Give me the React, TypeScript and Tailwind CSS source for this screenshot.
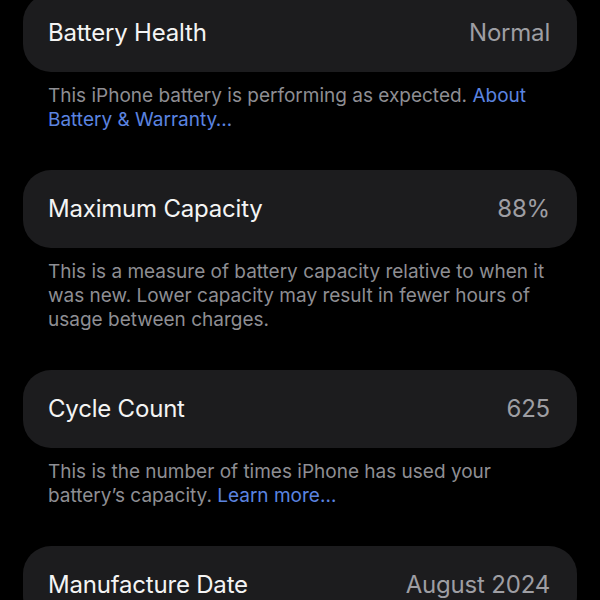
const rows = [
  {
    label: "Battery Health",
    value: "Normal",
    text: "This iPhone battery is performing as expected. ",
    link: "About Battery & Warranty…",
  },
  {
    label: "Maximum Capacity",
    value: "88%",
    text: "This is a measure of battery capacity relative to when it was new. Lower capacity may result in fewer hours of usage between charges.",
  },
  {
    label: "Cycle Count",
    value: "625",
    text: "This is the number of times iPhone has used your battery’s capacity. ",
    link: "Learn more…",
  },
  { label: "Manufacture Date", value: "August 2024" },
];

export default function App() {
  return (
    <div
      className="h-[600px] w-[600px] overflow-hidden bg-black px-[23px]"
      style={{ fontFamily: "Inter, 'Noto Sans', sans-serif" }}
    >
      <div className="-mt-[6px] flex flex-col">
        {rows.map((r) => (
          <div key={r.label} className="mb-[38px]">
            <div className="flex h-[78px] items-center justify-between rounded-[28px] bg-[#1c1c1e] pl-[25px] pr-[27px]">
              <span className="text-[24px] tracking-[-0.2px] text-[#f4f4f4]">{r.label}</span>
              <span className="text-[24px] tracking-[-0.2px] text-[#9e9ea3]">{r.value}</span>
            </div>
            {r.text && (
              <p className="mt-3 pl-[25px] pr-[18px] text-[19px] leading-[24px] text-[#8e8e93]">
                {r.text}
                {r.link && <span className="text-[#5b84e0]">{r.link}</span>}
              </p>
            )}
          </div>
        ))}
      </div>
    </div>
  );
}
